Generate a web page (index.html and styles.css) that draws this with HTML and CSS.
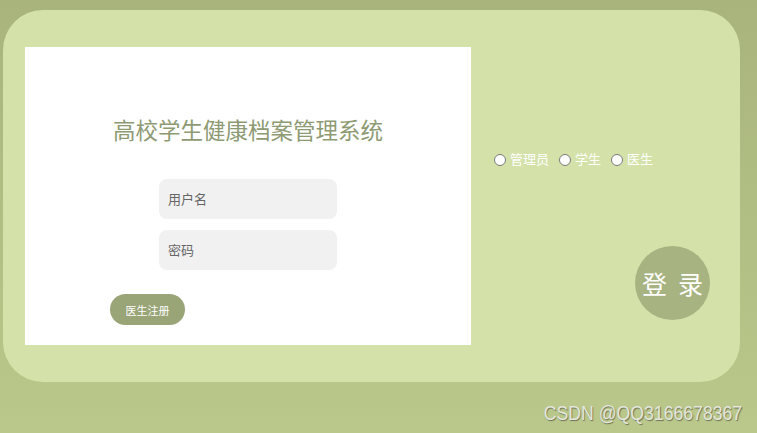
FILE: index.html
```html
<!DOCTYPE html>
<html lang="zh-CN">
<head>
    <meta charset="UTF-8">
    <meta name="viewport" content="width=device-width, initial-scale=1.0">
    <title>高校学生健康档案管理系统</title>
    <link rel="stylesheet" href="styles.css">
</head>
<body>
    <div class="login-panel">
        <div class="form-box">
            <h2>高校学生健康档案管理系统</h2>
            <form class="login-form">
                <input type="text" class="text-input" placeholder="用户名">
                <input type="password" class="text-input" placeholder="密码">
            </form>
            <button class="register-btn">医生注册</button>
        </div>
        <div class="side-box">
            <div class="role-group">
                <label class="role"><input type="radio" name="role">管理员</label>
                <label class="role"><input type="radio" name="role">学生</label>
                <label class="role"><input type="radio" name="role">医生</label>
            </div>
            <button class="login-btn">登 录</button>
        </div>
    </div>
    <div class="watermark"><span>CSDN @QQ3166678367</span></div>
</body>
</html>
```

FILE: styles.css
```css
* {
    box-sizing: border-box;
    margin: 0;
    padding: 0;
    font-family: 'Liberation Sans', Arial, 'Noto Sans CJK SC', sans-serif;
}

body {
    width: 757px;
    height: 433px;
    overflow: hidden;
    background: linear-gradient(#a8b47c, #bac88b);
    padding: 10px 0 0 3px;
}

.login-panel {
    width: 737px;
    height: 372px;
    background-color: #d4e2a9;
    border-radius: 40px;
    padding: 37px 0 0 22px;
    display: flex;
}

.form-box {
    width: 446px;
    height: 298px;
    background-color: #fff;
    padding-top: 70px;
}

h2 {
    color: #8e9a73;
    font-size: 22.5px;
    font-weight: normal;
    line-height: 30px;
    text-align: center;
}

.login-form {
    display: flex;
    flex-direction: column;
    align-items: center;
    gap: 11px;
    margin-top: 32px;
}

.text-input {
    width: 178px;
    height: 40px;
    border: none;
    outline: none;
    background-color: #f1f1f1;
    border-radius: 8px;
    padding: 0 9px;
    font-size: 13px;
    color: #555;
}

.text-input::placeholder {
    color: #666;
}

.register-btn {
    display: block;
    margin: 24px 0 0 85px;
    width: 75px;
    height: 31px;
    border: none;
    border-radius: 16px;
    background-color: #99a477;
    color: #fff;
    font-size: 11px;
    cursor: pointer;
}

.side-box {
    flex: 1;
    display: flex;
    flex-direction: column;
    padding: 106px 30px 0 23px;
}

.role-group {
    display: flex;
    gap: 10px;
}

.role {
    display: flex;
    align-items: center;
    color: #fff;
    font-size: 13px;
    line-height: 13px;
}

.role input {
    width: 12px;
    height: 12px;
    margin: 0 4px 0 0;
}

.login-btn {
    align-self: flex-end;
    margin-top: 80px;
    width: 75px;
    height: 74px;
    border: none;
    border-radius: 50%;
    background-color: #a8b382;
    color: #fff;
    font-size: 25px;
    word-spacing: 4px;
    cursor: pointer;
}

.watermark {
    text-align: right;
    padding-right: 15px;
    margin-top: 19px;
}

.watermark span {
    display: inline-block;
    transform: scaleX(0.84);
    transform-origin: right center;
    font-size: 21px;
    line-height: 24px;
    color: #e4e6dc;
    text-shadow: 1px 1px 1px #6c7356;
}
```
